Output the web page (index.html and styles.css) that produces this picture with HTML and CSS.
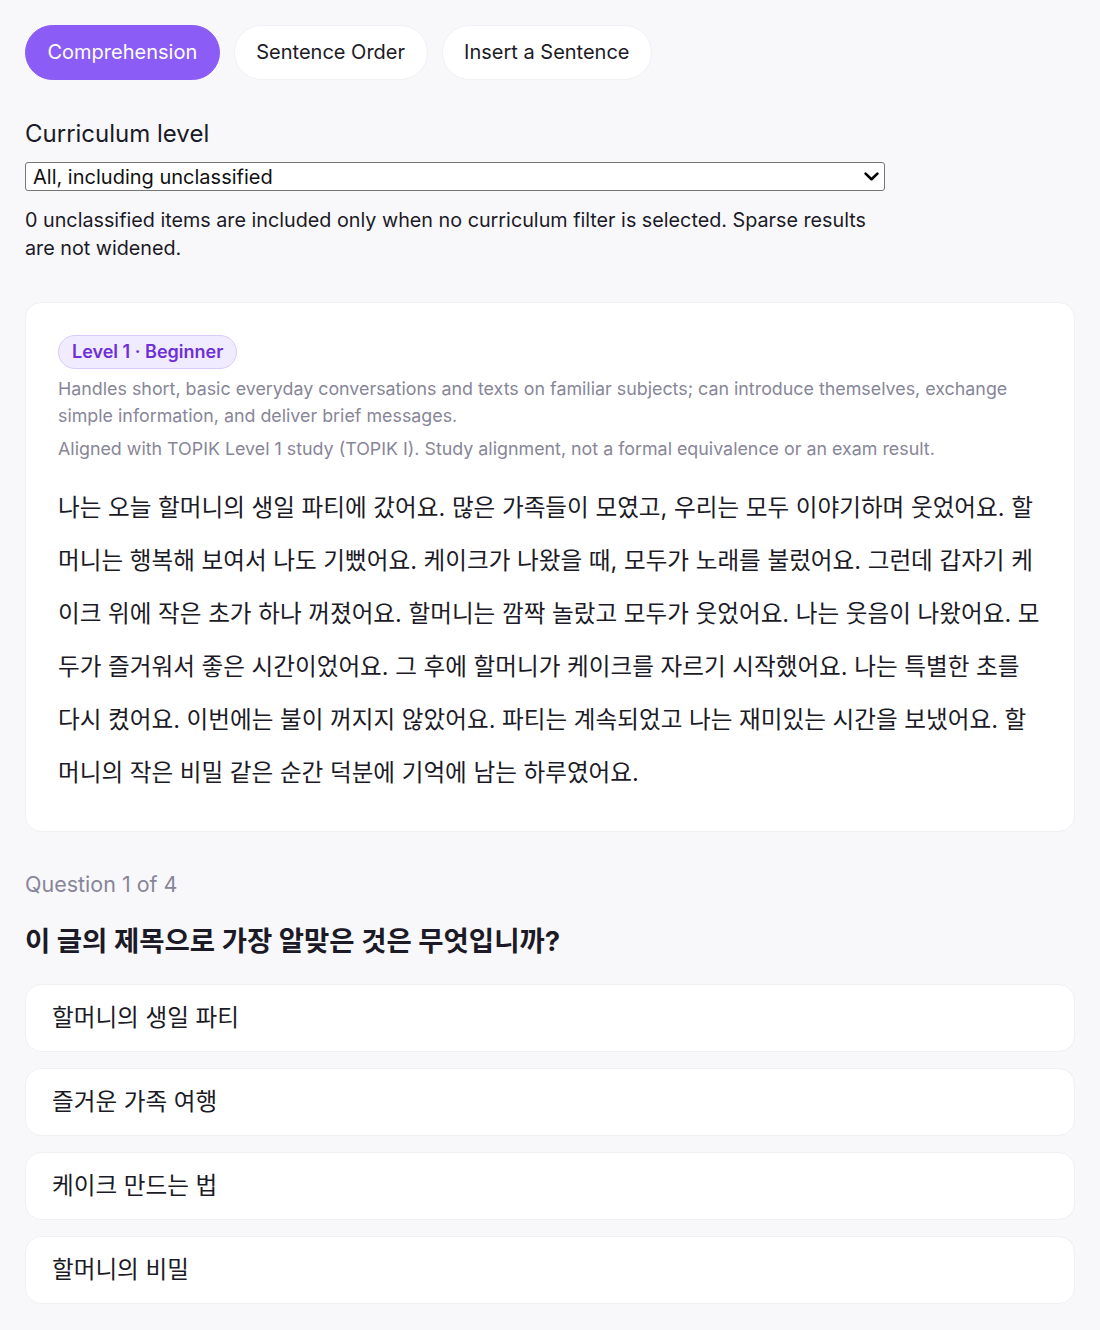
FILE: index.html
```html
<!DOCTYPE html>
<html lang="en">
<head>
<meta charset="utf-8">
<title>Reading practice</title>
<link rel="stylesheet" href="styles.css">
</head>
<body>
<main class="page">
  <nav class="tabs">
    <button class="tab tab-active">Comprehension</button>
    <button class="tab">Sentence Order</button>
    <button class="tab">Insert a Sentence</button>
  </nav>

  <section class="filter">
    <label class="filter-label" for="level">Curriculum level</label>
    <div class="select-wrap">
      <select id="level" class="filter-select">
        <option>All, including unclassified</option>
      </select>
      <svg class="select-chevron" width="15" height="9" viewBox="0 0 15 9" aria-hidden="true">
        <path d="M1.6 1.6 L7.5 7.2 L13.4 1.6" fill="none" stroke="#000" stroke-width="2.6" stroke-linecap="round" stroke-linejoin="round"/>
      </svg>
    </div>
    <p class="filter-help">0 unclassified items are included only when no curriculum filter is selected. Sparse results are not widened.</p>
  </section>

  <article class="card">
    <span class="badge">Level 1 · Beginner</span>
    <p class="level-desc">Handles short, basic everyday conversations and texts on familiar subjects; can introduce themselves, exchange simple information, and deliver brief messages.</p>
    <p class="level-note">Aligned with TOPIK Level 1 study (TOPIK I). Study alignment, not a formal equivalence or an exam result.</p>
    <p class="passage">나는 오늘 할머니의 생일 파티에 갔어요. 많은 가족들이 모였고, 우리는 모두 이야기하며 웃었어요. 할머니는 행복해 보여서 나도 기뻤어요. 케이크가 나왔을 때, 모두가 노래를 불렀어요. 그런데 갑자기 케이크 위에 작은 초가 하나 꺼졌어요. 할머니는 깜짝 놀랐고 모두가 웃었어요. 나는 웃음이 나왔어요. 모두가 즐거워서 좋은 시간이었어요. 그 후에 할머니가 케이크를 자르기 시작했어요. 나는 특별한 초를 다시 켰어요. 이번에는 불이 꺼지지 않았어요. 파티는 계속되었고 나는 재미있는 시간을 보냈어요. 할머니의 작은 비밀 같은 순간 덕분에 기억에 남는 하루였어요.</p>
  </article>

  <section class="question">
    <p class="q-count">Question 1 of 4</p>
    <h2 class="q-title">이 글의 제목으로 가장 알맞은 것은 무엇입니까?</h2>
    <div class="options">
      <button class="option">할머니의 생일 파티</button>
      <button class="option">즐거운 가족 여행</button>
      <button class="option">케이크 만드는 법</button>
      <button class="option">할머니의 비밀</button>
    </div>
  </section>
</main>
</body>
</html>
```

FILE: styles.css
```css
* { box-sizing: border-box; }

html, body {
  margin: 0;
  background: #f8f8fb;
}

body {
  font-family: Inter, "Noto Sans CJK KR", sans-serif;
  color: #1b1a26;
}

.page {
  padding: 25px 25px 0;
}

.tabs {
  display: flex;
  gap: 14px;
}

.tab {
  font-family: inherit;
  font-size: 20px;
  line-height: 25px;
  padding: 14px 21.5px;
  border-radius: 999px;
  border: 1px solid #f1f1f5;
  background: #ffffff;
  color: #1b1a26;
}

.tab-active {
  background: #8b5cf6;
  border-color: #8b5cf6;
  color: #ffffff;
}

.filter {
  margin-top: 39px;
}

.filter-label {
  display: block;
  font-size: 24px;
  line-height: 30px;
  margin-bottom: 13px;
}

.select-wrap {
  position: relative;
  width: 860px;
}

.filter-select {
  display: block;
  width: 100%;
  height: 29px;
  font-family: inherit;
  font-size: 20px;
  color: #111;
  background: #ffffff;
  border: 1px solid #767676;
  border-radius: 3px;
  padding: 0 30px 0 7px;
  appearance: none;
  -webkit-appearance: none;
}

.select-chevron {
  position: absolute;
  right: 6px;
  top: 10px;
  pointer-events: none;
}

.filter-help {
  max-width: 860px;
  margin: 15px 0 0;
  font-size: 19.75px;
  line-height: 28px;
}

.card {
  margin-top: 40px;
  background: #ffffff;
  border: 1px solid #f0f0f4;
  border-radius: 16px;
  padding: 32px;
}

.badge {
  display: inline-block;
  font-size: 18px;
  font-weight: 600;
  line-height: 22px;
  padding: 5px 13px;
  border-radius: 999px;
  background: #f1ebff;
  border: 1px solid #d9cbfb;
  color: #6d2fd8;
}

.level-desc,
.level-note {
  margin: 6px 0 0;
  font-size: 17.85px;
  line-height: 27px;
  color: #878698;
}

.passage {
  margin: 19px 0 0;
  font-size: 23.6px;
  line-height: 53px;
  word-break: break-all;
  color: #1b1a26;
}

.question {
  margin-top: 38px;
}

.q-count {
  margin: 0;
  font-size: 21.5px;
  line-height: 28px;
  color: #878698;
}

.q-title {
  margin: 25px 0 0;
  font-size: 27.5px;
  line-height: 36px;
  font-weight: 700;
}

.options {
  margin-top: 25px;
  display: flex;
  flex-direction: column;
  gap: 16px;
}

.option {
  text-align: left;
  font-family: inherit;
  font-size: 23.6px;
  line-height: 30px;
  padding: 18px 26px;
  color: #1b1a26;
  background: #ffffff;
  border: 1px solid #f0f0f4;
  border-radius: 16px;
}
```
